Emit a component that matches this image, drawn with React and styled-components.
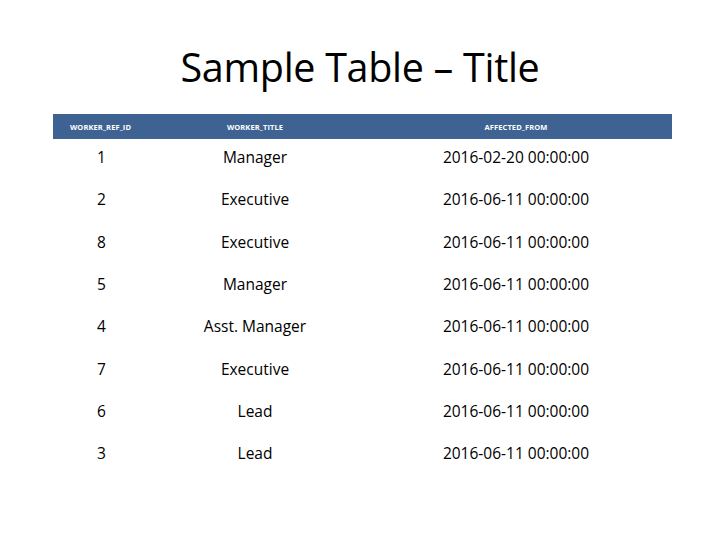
import React from "react";
import styled, { createGlobalStyle } from "styled-components";

const GlobalStyle = createGlobalStyle`
  html, body {
    margin: 0;
    padding: 0;
    background: #ffffff;
  }
  body {
    font-family: "Open Sans", "Noto Sans", sans-serif;
    color: #000000;
  }
`;

const Slide = styled.div`
  width: 720px;
  height: 540px;
  box-sizing: border-box;
  padding-top: 41px;
  display: flex;
  flex-direction: column;
  align-items: center;
`;

const Title = styled.h1`
  margin: 0 0 20px 0;
  font-weight: 400;
  font-size: 39.5px;
  line-height: 53px;
  letter-spacing: -0.3px;
`;

const Table = styled.div`
  width: 619px;
  margin-left: 5px;
  display: flex;
  flex-direction: column;
`;

const HeaderRow = styled.div`
  display: grid;
  grid-template-columns: 97px 210px 1fr;
  height: 25px;
  align-items: center;
  background: #3e6392;
  color: #ffffff;
  font-size: 7.5px;
  font-weight: 700;
  letter-spacing: 0.1px;
`;

const HeaderCell = styled.div`
  text-align: ${(p) => p.$align || "center"};
  padding-left: ${(p) => (p.$align === "left" ? "17px" : "0")};
`;

const Row = styled.div`
  display: grid;
  grid-template-columns: 97px 210px 1fr;
  height: 42.3px;
  align-items: center;
  font-size: 15.5px;
  padding-bottom: 6px;
  box-sizing: border-box;
`;

const Cell = styled.div`
  text-align: center;
`;

const rows = [
  ["1", "Manager", "2016-02-20 00:00:00"],
  ["2", "Executive", "2016-06-11 00:00:00"],
  ["8", "Executive", "2016-06-11 00:00:00"],
  ["5", "Manager", "2016-06-11 00:00:00"],
  ["4", "Asst. Manager", "2016-06-11 00:00:00"],
  ["7", "Executive", "2016-06-11 00:00:00"],
  ["6", "Lead", "2016-06-11 00:00:00"],
  ["3", "Lead", "2016-06-11 00:00:00"],
];

export default function App() {
  return (
    <>
      <GlobalStyle />
      <Slide>
        <Title>Sample Table – Title</Title>
        <Table>
          <HeaderRow>
            <HeaderCell $align="left">WORKER_REF_ID</HeaderCell>
            <HeaderCell>WORKER_TITLE</HeaderCell>
            <HeaderCell>AFFECTED_FROM</HeaderCell>
          </HeaderRow>
          {rows.map((r, i) => (
            <Row key={i}>
              <Cell>{r[0]}</Cell>
              <Cell>{r[1]}</Cell>
              <Cell>{r[2]}</Cell>
            </Row>
          ))}
        </Table>
      </Slide>
    </>
  );
}
